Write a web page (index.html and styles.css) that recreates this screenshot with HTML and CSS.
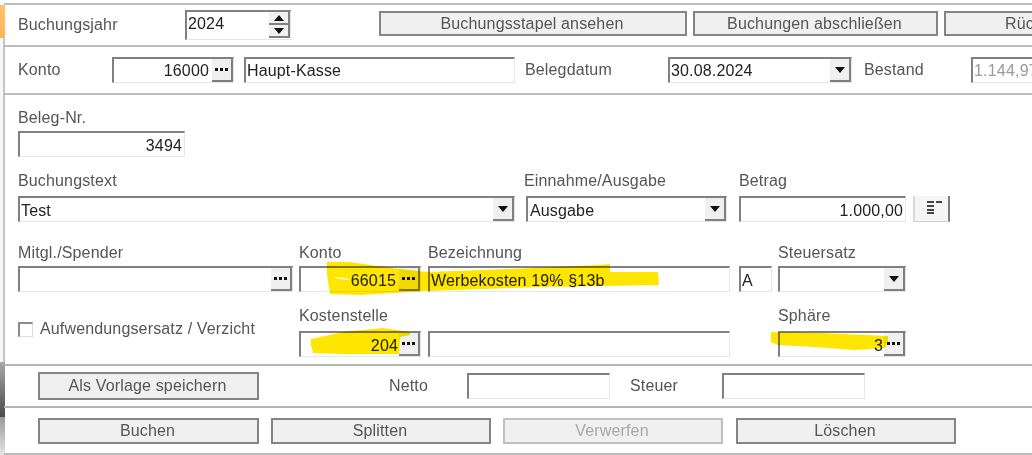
FILE: index.html
```html
<!DOCTYPE html>
<html lang="de">
<head>
<meta charset="utf-8">
<title>Buchung</title>
<link rel="stylesheet" href="styles.css">
</head>
<body>
<svg class="defs" width="0" height="0" aria-hidden="true">
  <defs>
    <g id="dots"><rect x="0" y="0" width="3" height="3"/><rect x="5" y="0" width="3" height="3"/><rect x="10" y="0" width="3" height="3"/></g>
    <path id="down" d="M0 0H10L5 6Z"/>
    <path id="up" d="M0 6H10L5 0Z"/>
  </defs>
</svg>
<div class="page">
  <aside class="strip">
    <div class="strip-top"></div>
    <div class="strip-orange"></div>
    <div class="strip-plain"></div>
    <div class="strip-dark"></div>
    <div class="strip-fade"></div>
  </aside>
  <main class="main">
    <section class="bar bar-year">
      <span class="label w-year">Buchungsjahr</span>
      <div class="field spin w-spin">
        <span class="value">2024</span>
        <div class="spinner">
          <span class="spin-btn"><svg width="10" height="6"><use href="#up"/></svg></span>
          <span class="spin-btn"><svg width="10" height="6"><use href="#down"/></svg></span>
        </div>
      </div>
      <div class="top-actions">
        <button class="btn w-stapel">Buchungsstapel ansehen</button>
        <button class="btn w-close">Buchungen abschließen</button>
        <button class="btn w-undo">Rückgängig</button>
      </div>
    </section>
    <section class="bar bar-konto">
      <span class="label w-konto">Konto</span>
      <div class="field w-122"><span class="value right inset">16000</span><span class="pick"><svg width="13" height="3"><use href="#dots"/></svg></span></div>
      <div class="field w-name"><span class="value">Haupt-Kasse</span></div>
      <span class="label w-beleg">Belegdatum</span>
      <div class="field w-date"><span class="value">30.08.2024</span><span class="pick"><svg width="10" height="6"><use href="#down"/></svg></span></div>
      <span class="label w-bestand">Bestand</span>
      <div class="field w-stock"><span class="value muted">1.144,97</span></div>
    </section>
    <section class="form">
      <div class="row row-a">
        <div class="col w-beleg-nr"><span class="label">Beleg-Nr.</span><div class="field"><span class="value right pad">3494</span></div></div>
      </div>
      <div class="row row-b">
        <div class="col w-text"><span class="label">Buchungstext</span><div class="field"><span class="value">Test</span><span class="pick"><svg width="10" height="6"><use href="#down"/></svg></span></div></div>
        <div class="col w-type"><span class="label shift">Einnahme/Ausgabe</span><div class="field"><span class="value nudge">Ausgabe</span><span class="pick"><svg width="10" height="6"><use href="#down"/></svg></span></div></div>
        <div class="col w-amount"><span class="label">Betrag</span><div class="field"><span class="value right pad">1.000,00</span></div></div>
        <button class="calc" aria-label="Rechner">
          <svg width="16" height="14" viewBox="0 0 16 14"><path d="M0 0h7v2H0zM0 4h7v2H0zM0 8h7v2H0zM0 11h7v2H0zM9 0h6v2H9z" fill="#444"/></svg>
        </button>
      </div>
      <div class="row row-c">
        <div class="col w-member"><span class="label">Mitgl./Spender</span><div class="field"><span class="value"></span><span class="pick"><svg width="13" height="3"><use href="#dots"/></svg></span></div></div>
        <div class="col w-122"><span class="label">Konto</span><div class="field"><span class="value right inset">66015</span><span class="pick"><svg width="13" height="3"><use href="#dots"/></svg></span></div></div>
        <div class="col w-desc"><span class="label">Bezeichnung</span><div class="field"><span class="value">Werbekosten 19% §13b</span></div></div>
        <div class="col w-flag"><div class="field"><span class="value">A</span></div></div>
        <div class="col w-128"><span class="label">Steuersatz</span><div class="field"><span class="value"></span><span class="pick"><svg width="10" height="6"><use href="#down"/></svg></span></div></div>
      </div>
      <div class="row row-d">
        <label class="check w-check"><span class="box"></span><span class="label">Aufwendungsersatz / Verzicht</span></label>
        <div class="col w-122"><span class="label">Kostenstelle</span><div class="field"><span class="value right">204</span><span class="pick"><svg width="13" height="3"><use href="#dots"/></svg></span></div></div>
        <div class="col w-desc"><div class="field"><span class="value"></span></div></div>
        <div class="col w-sphere"><span class="label">Sphäre</span><div class="field"><span class="value right">3</span><span class="pick"><svg width="13" height="3"><use href="#dots"/></svg></span></div></div>
      </div>
    </section>
    <section class="bar bar-net">
      <button class="btn w-221">Als Vorlage speichern</button>
      <span class="label w-netto">Netto</span>
      <div class="field w-143"><span class="value"></span></div>
      <span class="label w-steuer">Steuer</span>
      <div class="field w-143"><span class="value"></span></div>
    </section>
    <section class="bar bar-actions">
      <button class="btn w-221">Buchen</button>
      <button class="btn w-220">Splitten</button>
      <button class="btn w-220 off">Verwerfen</button>
      <button class="btn w-220 last">Löschen</button>
    </section>
  </main>
  <svg class="marker" width="1032" height="455" viewBox="0 0 1032 455" aria-hidden="true">
    <path fill-rule="evenodd" d="M327 262L350 262L377 266L400 269L427 272L510 269L600 265L610 264L610 272L658 272L659 285L543 287L427 291L360 295L330 294L327 275ZM332 277L345 278L352 280L340 279Z"/>
    <path d="M311 339L343 332L383 328L410 332L410 335L400 337L399 354L343 354L313 353L311 345Z"/>
    <path d="M771 332L821 333L888 336L888 342L885 348L855 350L815 347L778 345L771 342Z"/>
  </svg>
</div>
</body>
</html>
```
FILE: styles.css
```css
* { box-sizing: border-box; }
html, body { margin: 0; height: 100%; background: #fff; overflow: hidden; }
.defs { position: absolute; }
.page {
  position: relative;
  display: flex;
  width: 1032px;
  height: 455px;
  overflow: hidden;
  font-family: "Liberation Sans", Arial, sans-serif;
  font-size: 16px;
  letter-spacing: 0.15px;
  color: #555;
  filter: blur(0.35px);
}
.strip { display: flex; flex-direction: column; width: 5px; flex: none; }
.strip-top { height: 5px; }
.strip-orange { height: 33px; background: linear-gradient(#fdc470, #ffb454); }
.strip-plain { height: 324px; border-right: 2px solid #c4c4c4; background: #f7f7f7; }
.strip-dark { height: 55px; background: linear-gradient(#a8a8a8, #4a4a4a); }
.strip-fade { flex: 1; background: linear-gradient(#9a9a9a, #e4e4e4); }

.main { flex: 1; min-width: 0; display: flex; flex-direction: column; padding-top: 3px; margin-left: -1px; }
.bar { display: flex; align-items: center; padding-left: 14px; flex: none; }
.bar-year { height: 44px; border-top: 2px solid #bcbcbc; border-bottom: 2px solid #bcbcbc; }
.bar-konto { height: 48px; border-bottom: 2px solid #bcbcbc; }
.bar-net { height: 44px; padding-left: 34px; border-top: 2px solid #b4b4b4; border-bottom: 2px solid #b4b4b4; }
.bar-actions { height: 47px; padding-left: 34px; gap: 12px; border-bottom: 2px solid #bcbcbc; }
.form { height: 269px; padding-left: 14px; flex: none; }

.label { display: block; line-height: 22px; white-space: nowrap; color: #555; }
.label.shift { margin-left: -2px; }
.w-year { width: 167px; flex: none; }
.w-konto { width: 94px; flex: none; }
.w-beleg { width: 143px; margin-left: 10px; flex: none; }
.w-bestand { width: 107px; margin-left: 12px; flex: none; }
.w-netto { width: 78px; margin-left: 130px; flex: none; }
.w-steuer { width: 92px; margin-left: 20px; flex: none; }

.field {
  display: flex;
  height: 26px;
  flex: none;
  background: #fff;
  border-style: solid;
  border-color: #808080 #e6e6e6 #e6e6e6 #808080;
  border-width: 2px 1px 1px 2px;
}
.value {
  flex: 1;
  min-width: 0;
  padding: 0 1px;
  line-height: 25px;
  color: #222;
  white-space: nowrap;
  overflow: hidden;
}
.bar-konto .value { line-height: 23px; }
.value.right { text-align: right; }
.value.pad { padding-right: 2px; }
.value.inset { padding-right: 3px; }
.value.nudge { padding-left: 2px; }
.value.muted { color: #9a9a9a; letter-spacing: 0.2px; }
.pick {
  display: flex;
  align-items: center;
  justify-content: center;
  width: 21px;
  flex: none;
  background: #f0f0f0;
  border-right: 2px solid #808080;
  border-bottom: 2px solid #808080;
}
.pick svg { fill: #111; display: block; }

.spin { height: 30px; }
.spin .value { line-height: 24px; }
.w-spin { width: 106px; }
.spinner { display: flex; flex-direction: column; width: 21px; flex: none; margin: 0 0 1px 0; }
.spin-btn {
  flex: 1;
  display: flex;
  align-items: center;
  justify-content: center;
  background: #f0f0f0;
  border-right: 2px solid #808080;
  border-bottom: 2px solid #808080;
}
.spin-btn svg { fill: #111; display: block; }

.top-actions { display: flex; gap: 6px; margin-left: 88px; margin-bottom: 3px; flex: none; }
.btn {
  display: block;
  flex: none;
  height: 25px;
  padding: 0 2px 0 0;
  font: inherit;
  letter-spacing: inherit;
  color: #555;
  background: #f0f0f0;
  border: 2px solid #858585;
  white-space: nowrap;
}
.btn.off { color: #a8a8a8; border-color: #c0c0c0; }
.btn.last { margin-left: 1px; }
.w-stapel { width: 308px; }
.w-close { width: 245px; }
.w-undo { width: 210px; }
.w-221 { width: 221px; }
.w-220 { width: 220px; }
.bar-net .btn { height: 28px; }
.bar-actions .btn { height: 26px; padding-top: 1px; }

.w-122 { width: 122px; }
.w-name { width: 271px; margin-left: 10px; }
.w-date { width: 184px; }
.w-stock { width: 120px; }
.w-143 { width: 143px; }

.row { display: flex; align-items: flex-end; }
.col { flex: none; display: flex; flex-direction: column; }
.row-a { padding-top: 12px; }
.row-a .label, .row-c .label { margin-bottom: 2px; }
.row-b { margin-top: 13px; }
.row-b .label, .row-d .label { margin-bottom: 4px; }
.row-c { margin-top: 20px; gap: 6px; }
.row-d { margin-top: 13px; }

.w-beleg-nr { width: 167px; }
.w-text { width: 497px; }
.w-type { width: 201px; margin-left: 11px; }
.w-amount { width: 167px; margin-left: 12px; }
.w-member { width: 275px; }
.w-desc { width: 302px; margin-left: 1px; }
.w-flag { width: 33px; margin-left: 3px; }
.w-128 { width: 128px; }
.w-sphere { width: 128px; margin-left: 48px; }
.row-d .w-desc { margin-left: 7px; }

.calc {
  display: flex;
  align-items: center;
  justify-content: center;
  width: 37px;
  height: 26px;
  margin-left: 7px;
  padding: 0 0 2px 6px;
  background: #f5f5f5;
  border: 0;
  border-left: 2px solid #d8d8d8;
  border-right: 2px solid #7c7c7c;
  border-bottom: 1px solid #d0d0d0;
}
.calc svg { display: block; }

.check { display: flex; align-items: flex-start; gap: 7px; width: 281px; align-self: flex-start; margin-top: 13px; flex: none; }
.check .label { margin: 0; }
.box {
  width: 15px;
  height: 15px;
  margin-top: 4px;
  flex: none;
  background: #fff;
  border-style: solid;
  border-color: #8a8a8a #dedede #dedede #8a8a8a;
  border-width: 2px 1px 1px 2px;
}

.marker {
  position: absolute;
  left: 0;
  top: 0;
  fill: #ffe600;
  mix-blend-mode: multiply;
  pointer-events: none;
}
```
